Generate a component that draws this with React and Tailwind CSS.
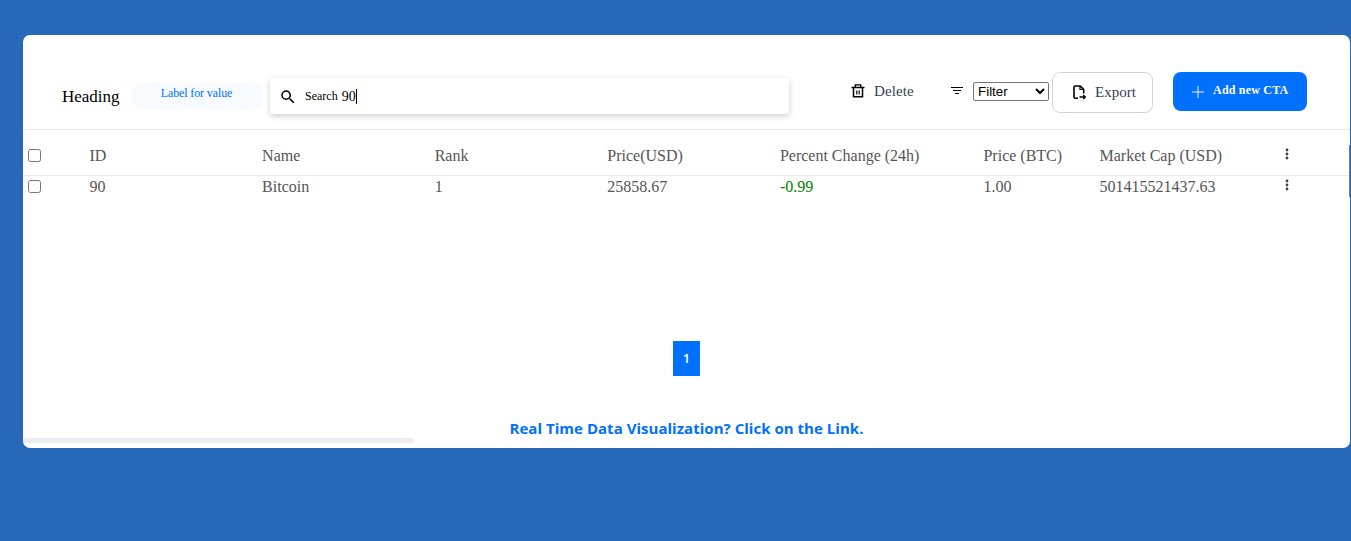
const columns = [
  { label: "ID", value: "90", width: "w-[172.6px]" },
  { label: "Name", value: "Bitcoin", width: "w-[172.6px]" },
  { label: "Rank", value: "1", width: "w-[172.6px]" },
  { label: "Price(USD)", value: "25858.67", width: "w-[172.6px]" },
  { label: "Percent Change (24h)", value: "-0.99", width: "w-[203.6px]", tone: "text-[#008000]" },
  { label: "Price (BTC)", value: "1.00", width: "w-[116px]" },
  { label: "Market Cap (USD)", value: "501415521437.63", width: "w-[182px]" },
];

function SearchIcon() {
  return (
    <svg className="mt-px size-[18px] shrink-0" viewBox="0 0 24 24" fill="#000">
      <path d="M15.5 14h-.79l-.28-.27A6.47 6.47 0 0 0 16 9.5 6.5 6.5 0 1 0 9.5 16c1.61 0 3.09-.59 4.23-1.57l.27.28v.79l5 4.99L20.49 19l-4.99-5zm-6 0C7.01 14 5 11.99 5 9.5S7.01 5 9.5 5 14 7.01 14 9.5 11.99 14 9.5 14z" />
    </svg>
  );
}

function TrashIcon() {
  return (
    <svg className="h-[14px] w-[14px]" viewBox="0 0 14 14" fill="none" stroke="#000">
      <path d="M.5 3.5h13" strokeWidth="1.5" />
      <path d="M4.3 3.2V.9h5.4v2.3" strokeWidth="1.4" />
      <path d="M2.5 3.5v9.3h9V3.5" strokeWidth="1.5" />
      <path d="M5.8 6.5v4M8.2 6.5v4" strokeWidth="1.2" />
    </svg>
  );
}

function FilterIcon() {
  return (
    <svg className="h-[8px] w-[12px]" viewBox="0 0 12 8" stroke="#000" fill="none">
      <path d="M0 .5h12M2 3.5h8M4 6.5h4" />
    </svg>
  );
}

function ExportIcon() {
  return (
    <svg className="h-[15px] w-[13px]" viewBox="0 0 13 15" fill="none" stroke="#000" strokeWidth="1.6">
      <path d="M5 13.3H2.3A1.300 1.300 0 0 1 1 12V2.300A1.300 1.300 0 0 1 2.300 1H7.200L10.700 4.300V8.500" />
      <path d="M7 1V4.500H10.700" strokeWidth="1.200" />
      <path d="M6.500 12H12.300M10.200 9.900L12.300 12L10.200 14.100" strokeWidth="1.400" />
    </svg>
  );
}

function DotsIcon() {
  return (
    <svg className="h-[12px] w-[4px]" viewBox="0 0 4 12" fill="#444">
      <circle cx="2" cy="2" r="1.4" />
      <circle cx="2" cy="6" r="1.4" />
      <circle cx="2" cy="10" r="1.4" />
    </svg>
  );
}

function Checkbox() {
  return (
    <div className="w-[66.500px] shrink-0 pl-[5px]">
      <input type="checkbox" className="block size-[13px]" />
    </div>
  );
}

function Toolbar() {
  return (
    <header className="flex h-[95px] items-start border-b border-[#e9e9eb] pl-[39px]">
      <h1 className="mt-[52px] w-[69px] text-[17px] leading-5">Heading</h1>
      <div className="mt-[48px] h-[26px] w-[132px] rounded-full bg-[#f7faff] pr-px pt-[2px] text-center text-[12px] leading-4 tracking-[-0.12px] text-[#0070ff]">
        Label for value
      </div>
      <div className="ml-[7px] mt-[43px] flex h-[36px] w-[519px] items-center rounded-[3px] bg-white pl-[9px] shadow-[0_2px_6px_rgba(0,0,0,0.2)]">
        <SearchIcon />
        <span className="ml-2 text-[12px] leading-4">Search</span>
        <span className="ml-1 pt-px text-[14px] leading-4">90</span>
        <span className="h-[15px] w-px bg-black" />
      </div>
      <div className="ml-[62px] mt-[46px] flex h-5 items-center gap-[9px] text-[15px] text-[#344054]">
        <TrashIcon />
        <span className="tracking-[0.1px]">Delete</span>
      </div>
      <div className="ml-[37.300px] mt-[47px] flex items-center gap-[10px]">
        <div className="-mt-[2px]"><FilterIcon /></div>
        <select className="h-[19px] w-[76px] appearance-auto rounded-[2px] border border-[#767676] bg-white font-['Liberation_Sans',Arial,sans-serif] text-[13.333px] text-black">
          <option>Filter</option>
        </select>
      </div>
      <button className="ml-[3px] mt-[37px] flex h-[41px] w-[101px] items-center gap-[9px] rounded-lg border border-[#d0d5dd] pl-5 text-[15px] text-[#344054]">
        <ExportIcon />
        <span>Export</span>
      </button>
      <button className="ml-5 mt-[37px] flex h-[39px] w-[134px] items-center gap-[9px] rounded-lg bg-[#0070ff] pl-[19px] text-[12px] font-bold text-white">
        <svg className="size-[12px]" viewBox="0 0 12 12" stroke="#fff" strokeOpacity="0.9" fill="none">
          <path d="M6 0v12M0 6h12" />
        </svg>
        <span className="pb-[3px] tracking-[0.2px]">Add new CTA</span>
      </button>
    </header>
  );
}

export default function App() {
  return (
    <main className="flex h-[541px] w-full items-start bg-[#2768b9] pl-[23px] pt-[35px] font-['Liberation_Serif','Times_New_Roman',serif] text-black">
      <section className="relative flex h-[413px] w-[1327px] flex-col overflow-hidden rounded-[7px] bg-white">
        <Toolbar />
        <div className="flex h-[46px] items-center border-b border-[#e9e9eb] pb-px pt-[7px] text-[16px] text-[#555]">
          <Checkbox />
          {columns.map((c) => (
            <div key={c.label} className={`${c.width} shrink-0 whitespace-nowrap`}>{c.label}</div>
          ))}
          <div className="-mt-[3px] pl-[4px]"><DotsIcon /></div>
        </div>
        <div className="flex h-[22px] items-center pb-px text-[16px] leading-[23px] text-[#555]">
          <Checkbox />
          {columns.map((c) => (
            <div key={c.label} className={`${c.width} shrink-0 whitespace-nowrap ${c.tone ?? ""}`}>{c.value}</div>
          ))}
          <div className="-mt-[3px] pl-[4px]"><DotsIcon /></div>
        </div>
        <nav className="mt-[143px] flex justify-center">
          <button className="h-[35px] w-[27px] bg-[#0070ff] font-['Open_Sans',sans-serif] text-[13px] font-semibold text-white">1</button>
        </nav>
        <a className="mt-[40px] text-center font-['Open_Sans',sans-serif] text-[15px] font-bold leading-6 tracking-[0.03px] text-[#0070ff]">
          Real Time Data Visualization? Click on the Link.
        </a>
        <div className="absolute bottom-[5px] left-0 h-[5px] w-[391px] rounded-full bg-[#eaecf0]" />
        <div className="absolute right-0 top-[110px] h-[52px] w-px bg-[#777]" />
      </section>
    </main>
  );
}
